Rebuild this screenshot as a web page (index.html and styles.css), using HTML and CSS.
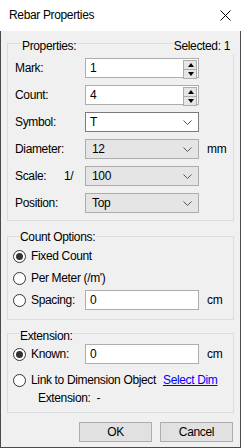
FILE: index.html
```html
<!DOCTYPE html>
<html lang="en">
<head>
  <meta charset="UTF-8">
  <title>Rebar Properties</title>
  <link rel="stylesheet" href="styles.css">
</head>
<body>
  <div class="window">
    <div class="titlebar">
      <span class="title">Rebar Properties</span>
      <svg class="close" width="11" height="11" viewBox="0 0 11 11"><path d="M0.5 0.5 L10.5 10.5 M10.5 0.5 L0.5 10.5" stroke="#000" stroke-width="1"/></svg>
    </div>
    <div class="content">
      <div class="group g1">
        <div class="head"><span class="legend">Properties:</span><span class="legend sel">Selected: 1</span></div>
        <div class="row">
          <span class="label">Mark:</span>
          <div class="box white">1
            <div class="spin"><span class="up"></span><span class="down"></span></div>
          </div>
        </div>
        <div class="row">
          <span class="label">Count:</span>
          <div class="box white">4
            <div class="spin"><span class="up"></span><span class="down"></span></div>
          </div>
        </div>
        <div class="row">
          <span class="label">Symbol:</span>
          <div class="box white dark">T
            <svg class="chev" width="9" height="5" viewBox="0 0 9 5"><polyline points="0.5,0.5 4.5,4.5 8.5,0.5" fill="none" stroke="#555"/></svg>
          </div>
        </div>
        <div class="row">
          <span class="label">Diameter:</span>
          <div class="box grey">12
            <svg class="chev" width="9" height="5" viewBox="0 0 9 5"><polyline points="0.5,0.5 4.5,4.5 8.5,0.5" fill="none" stroke="#555"/></svg>
          </div>
          <span class="unit">mm</span>
        </div>
        <div class="row">
          <span class="label short">Scale:</span><span class="ratio">1/</span>
          <div class="box grey">100
            <svg class="chev" width="9" height="5" viewBox="0 0 9 5"><polyline points="0.5,0.5 4.5,4.5 8.5,0.5" fill="none" stroke="#555"/></svg>
          </div>
        </div>
        <div class="row">
          <span class="label">Position:</span>
          <div class="box grey">Top
            <svg class="chev" width="9" height="5" viewBox="0 0 9 5"><polyline points="0.5,0.5 4.5,4.5 8.5,0.5" fill="none" stroke="#555"/></svg>
          </div>
        </div>
      </div>

      <div class="group g2">
        <div class="head"><span class="legend">Count Options:</span></div>
        <div class="rrow"><span class="radio on"></span><span>Fixed Count</span></div>
        <div class="rrow"><span class="radio"></span><span>Per Meter (/m')</span></div>
        <div class="rrow">
          <span class="radio"></span><span class="rlabel">Spacing:</span>
          <div class="box white">0</div>
          <span class="unit">cm</span>
        </div>
      </div>

      <div class="group g3">
        <div class="head"><span class="legend">Extension:</span></div>
        <div class="rrow">
          <span class="radio on"></span><span class="rlabel">Known:</span>
          <div class="box white">0</div>
          <span class="unit">cm</span>
        </div>
        <div class="rrow link-row">
          <span class="radio"></span><span class="linklabel">Link to Dimension Object</span>
          <a class="link" href="#">Select Dim</a>
        </div>
        <div class="ext">Extension:&nbsp; -</div>
      </div>

      <div class="buttons">
        <button class="btn">OK</button>
        <button class="btn">Cancel</button>
      </div>
    </div>
  </div>
</body>
</html>
```

FILE: styles.css
```css
html, body {
  margin: 0;
  padding: 0;
}
body {
  font-family: "Liberation Sans", Arial, sans-serif;
  font-size: 12px;
  letter-spacing: -0.35px;
  color: #000;
  background: #f0f0f0;
  white-space: nowrap;
}
.window {
  width: 241px;
  height: 448px;
  box-sizing: border-box;
  border: 1px solid #4a4a4a;
  border-top: none;
  background: #f0f0f0;
  display: flex;
  flex-direction: column;
}
.titlebar {
  height: 31px;
  background: #fff;
  display: flex;
  align-items: center;
  justify-content: space-between;
  padding: 0 10px 0 9px;
  margin: 0 -1px;
}
.title {
  margin-top: -1px;
}
.close {
  display: block;
}
.content {
  padding: 0 6px;
  display: flex;
  flex-direction: column;
}
.group {
  border: 1px solid #dcdcdc;
  display: flex;
  flex-direction: column;
}
.head {
  display: flex;
  justify-content: space-between;
  height: 16px;
  line-height: 16px;
  margin-top: -9px;
  padding: 0 0 0 6px;
}
.legend {
  background: #f0f0f0;
  padding: 0 1px;
}
.legend.sel {
  padding-right: 4px;
}
.g1 {
  margin-top: 12px;
  padding: 3px 0 7px 7px;
  gap: 7px;
}
.g1 .head {
  margin-right: -1px;
  margin-bottom: -3px;
}
.g2 {
  margin-top: 15px;
  padding: 1px 0 8px 5px;
}
.g3 {
  margin-top: 13px;
  padding: 3px 0 6px 5px;
}
.row {
  display: flex;
  align-items: center;
  height: 20px;
}
.label {
  width: 70px;
  flex: none;
}
.label.short {
  width: 49px;
}
.ratio {
  width: 21px;
  flex: none;
}
.box {
  position: relative;
  width: 114px;
  height: 20px;
  box-sizing: border-box;
  border: 1px solid #adadad;
  padding-left: 4px;
  line-height: 18px;
  flex: none;
}
.box.white {
  background: #fff;
}
.box.dark {
  border-color: #7a7a7a;
}
.box.grey {
  background: #e5e5e5;
  border-color: #acacac;
  padding-left: 6px;
}
.chev {
  position: absolute;
  right: 6px;
  top: 7px;
}
.spin {
  position: absolute;
  right: 1px;
  top: 1px;
  width: 14px;
  display: flex;
  flex-direction: column;
}
.spin span {
  height: 8px;
  border: 1px solid #adadad;
  background: #e6e6e6;
  position: relative;
}
.spin .down {
  border-top: none;
}
.spin .up::after,
.spin .down::after {
  content: "";
  position: absolute;
  left: 4px;
  border-left: 3px solid transparent;
  border-right: 3px solid transparent;
}
.spin .up::after {
  top: 2px;
  border-bottom: 4px solid #000;
}
.spin .down::after {
  top: 2px;
  border-top: 4px solid #000;
}
.unit {
  margin-left: 8px;
}
.rrow {
  display: flex;
  align-items: center;
  height: 22px;
}
.g3 .rrow {
  height: 20px;
}
.g3 .link-row {
  margin-top: 6px;
}
.radio {
  width: 13px;
  height: 13px;
  box-sizing: border-box;
  border: 1px solid #333;
  border-radius: 50%;
  background: #fff;
  margin-right: 5px;
  flex: none;
  display: flex;
  align-items: center;
  justify-content: center;
}
.radio.on::after {
  content: "";
  width: 7px;
  height: 7px;
  border-radius: 50%;
  background: #333;
}
.rlabel {
  width: 54px;
  flex: none;
}
.linklabel {
  width: 132px;
  flex: none;
}
.link {
  color: #0000ff;
}
.ext {
  height: 16px;
  line-height: 16px;
  padding-left: 25px;
}
.buttons {
  display: flex;
  justify-content: flex-end;
  gap: 8px;
  margin-top: 9px;
  padding-right: 1px;
}
.btn {
  width: 73px;
  height: 20px;
  border: 1px solid #adadad;
  background: #e1e1e1;
  font-family: inherit;
  font-size: 12px;
  letter-spacing: -0.35px;
  color: #000;
  padding: 0;
}
```
